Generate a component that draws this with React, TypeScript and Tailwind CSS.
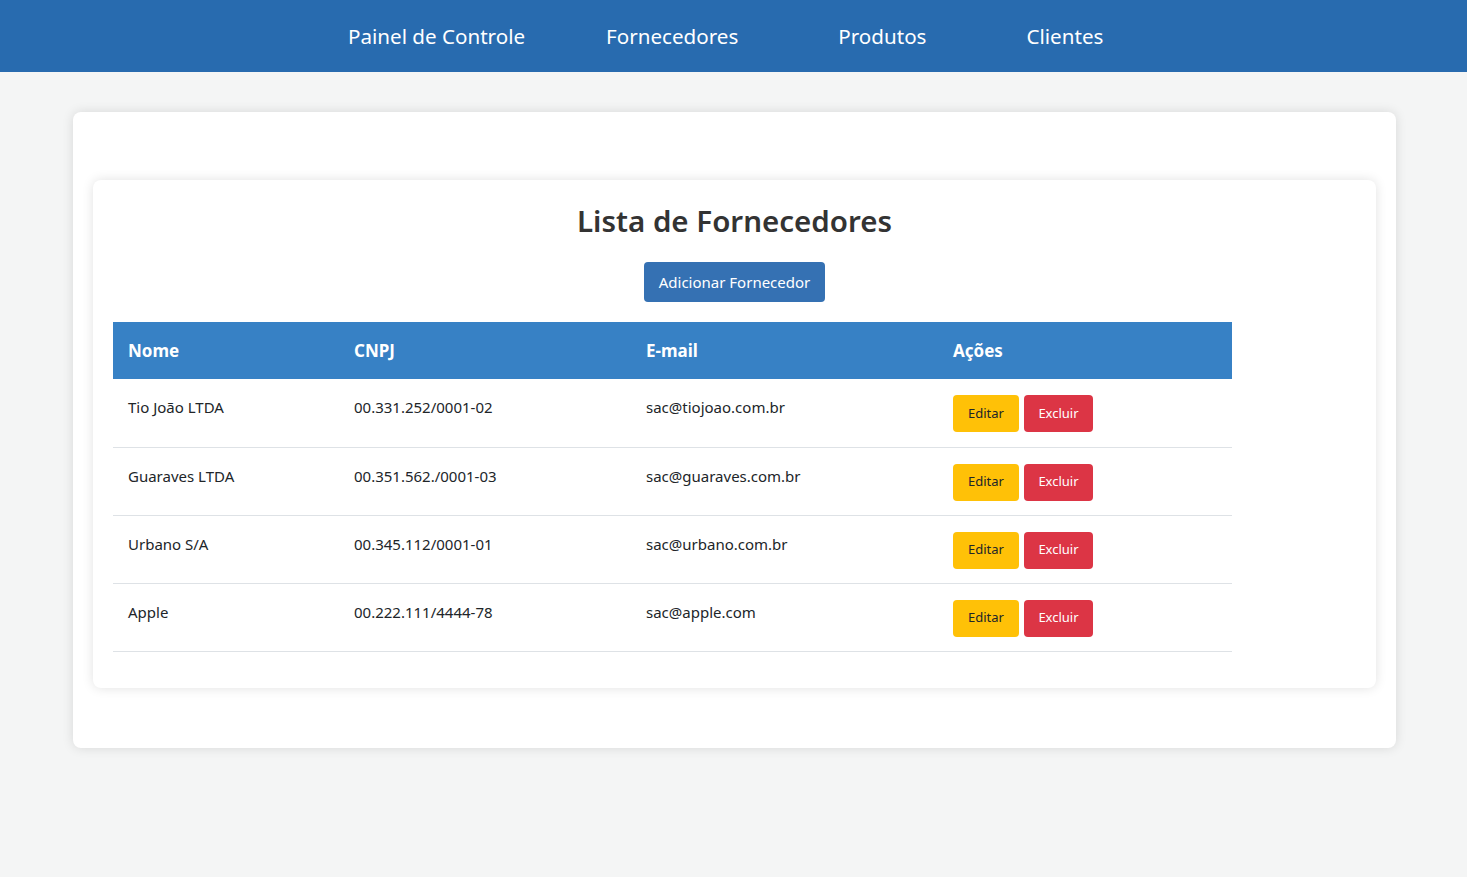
import React from 'react';

interface Fornecedor {
  nome: string;
  cnpj: string;
  email: string;
}

const fornecedores: Fornecedor[] = [
  { nome: 'Tio João LTDA', cnpj: '00.331.252/0001-02', email: 'sac@tiojoao.com.br' },
  { nome: 'Guaraves LTDA', cnpj: '00.351.562./0001-03', email: 'sac@guaraves.com.br' },
  { nome: 'Urbano S/A', cnpj: '00.345.112/0001-01', email: 'sac@urbano.com.br' },
  { nome: 'Apple', cnpj: '00.222.111/4444-78', email: 'sac@apple.com' },
];

const App = () => {
  return (
    <div className="min-h-[877px] bg-[#f4f5f5] font-['Noto_Sans',sans-serif] text-[#212529]">
      <nav className="h-[72px] bg-[#286baf] flex items-center pl-[348px] text-white text-[20.6px]">
        <a className="mr-[81px]">Painel de Controle</a>
        <a className="mr-[100px]">Fornecedores</a>
        <a className="mr-[100px]">Produtos</a>
        <a>Clientes</a>
      </nav>

      <div className="pl-[73px] pr-[71px] pt-[40px]">
        <div className="bg-white rounded-lg shadow-[0_0_12px_rgba(0,0,0,0.12)] px-5 pt-[68px] pb-[60px]">
          <div className="bg-white rounded-lg shadow-[0_0_12px_rgba(0,0,0,0.12)] px-5 pt-[20px] pb-[36px]">
            <h1 className="text-center text-[29.5px] font-semibold text-[#333] leading-[42px]">
              Lista de Fornecedores
            </h1>
            <div className="flex justify-center mt-[20px] mb-[20px]">
              <button className="h-[40px] px-[15px] bg-[#3571b3] text-white text-[15px] rounded">
                Adicionar Fornecedor
              </button>
            </div>
            <table className="w-[1119px] border-collapse text-[15px] text-left">
              <thead>
                <tr className="bg-[#3781c5] text-white h-[57px]">
                  <th className="w-[226px] px-[15px] text-[17px] font-bold">Nome</th>
                  <th className="w-[292px] px-[15px] text-[17px] font-bold">CNPJ</th>
                  <th className="w-[307px] px-[15px] text-[17px] font-bold">E-mail</th>
                  <th className="px-[15px] text-[17px] font-bold">Ações</th>
                </tr>
              </thead>
              <tbody>
                {fornecedores.map((f) => (
                  <tr key={f.nome} className="h-[68px] border-b border-[#dee2e6]">
                    <td className="px-[15px] align-top pt-[17px]">{f.nome}</td>
                    <td className="px-[15px] align-top pt-[17px]">{f.cnpj}</td>
                    <td className="px-[15px] align-top pt-[17px]">{f.email}</td>
                    <td className="px-[15px] align-top pt-[16px]">
                      <div className="flex gap-[5px]">
                        <button className="h-[37px] w-[66px] bg-[#ffc107] text-[#212529] text-[13px] rounded">
                          Editar
                        </button>
                        <button className="h-[37px] w-[69px] bg-[#dc3545] text-white text-[13px] rounded">
                          Excluir
                        </button>
                      </div>
                    </td>
                  </tr>
                ))}
              </tbody>
            </table>
          </div>
        </div>
      </div>
    </div>
  );
};

export default App;
